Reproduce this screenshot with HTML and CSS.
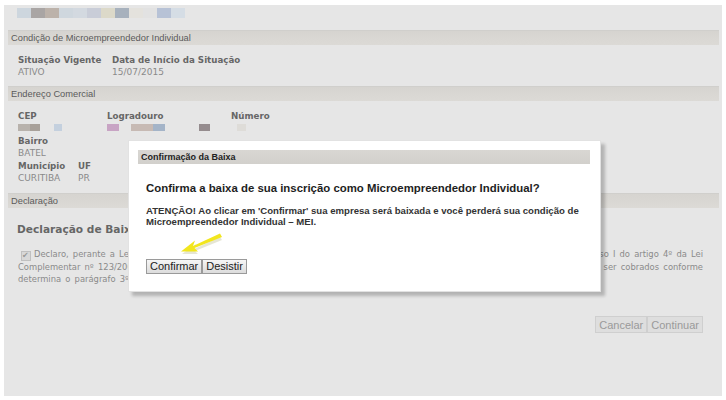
FILE: index.html
```html
<!DOCTYPE html>
<html lang="pt-BR">

<head>
    <meta charset="UTF-8">
    <title>Baixa MEI</title>
    <link rel="stylesheet" href="styles.css">
</head>

<body>
    <div class="page">
        <!-- blurred header strip -->
        <div class="blur-strip">
            <span class="b1"></span><span class="b2"></span><span class="b3"></span><span class="b4"></span>
            <span class="b5"></span><span class="b6"></span><span class="b7"></span><span class="b8"></span>
            <span class="b9"></span><span class="b10"></span><span class="b11"></span><span class="b12"></span>
        </div>

        <div class="sec-head">Condição de Microempreendedor Individual</div>
        <div class="fields first-sec">
            <div class="field w94">
                <div class="lbl">Situação Vigente</div>
                <div class="val">ATIVO</div>
            </div>
            <div class="field">
                <div class="lbl">Data de Início da Situação</div>
                <div class="val">15/07/2015</div>
            </div>
        </div>

        <div class="sec-head">Endereço Comercial</div>
        <div class="fields addr">
            <div class="field w89">
                <div class="lbl">CEP</div>
                <div class="val blur"><span class="c1"></span><span class="c2"></span><span class="c3"></span></div>
            </div>
            <div class="field w124">
                <div class="lbl">Logradouro</div>
                <div class="val blur"><span class="l1"></span><span class="l2"></span><span class="l3"></span><span class="l4"></span></div>
            </div>
            <div class="field">
                <div class="lbl">Número</div>
                <div class="val blur"><span class="n1"></span></div>
            </div>
        </div>
        <div class="fields tight">
            <div class="field">
                <div class="lbl">Bairro</div>
                <div class="val">BATEL</div>
            </div>
        </div>
        <div class="fields tight last-row">
            <div class="field w60">
                <div class="lbl">Município</div>
                <div class="val">CURITIBA</div>
            </div>
            <div class="field">
                <div class="lbl">UF</div>
                <div class="val">PR</div>
            </div>
        </div>

        <div class="sec-head">Declaração</div>
        <h3 class="decl-title">Declaração de Baixa</h3>
        <div class="decl">
            <div class="line">
                <span><span class="chk">&#10004;</span>Declaro, perante a Lei,</span>
                <span>inciso I do artigo 4º da Lei</span>
            </div>
            <div class="line">
                <span>Complementar nº 123/2006</span>
                <span>poderão ser cobrados conforme</span>
            </div>
            <div class="line">
                <span>determina o parágrafo 3º.</span>
            </div>
        </div>

        <div class="actions">
            <button class="btn-faded">Cancelar</button><button class="btn-faded">Continuar</button>
        </div>
    </div>

    <!-- modal -->
    <div class="dialog">
        <div class="dialog-title">Confirmação da Baixa</div>
        <div class="dialog-body">
            <h2>Confirma a baixa de sua inscrição como Microempreendedor Individual?</h2>
            <p>ATENÇÃO! Ao clicar em 'Confirmar' sua empresa será baixada e você perderá sua condição de Microempreendedor Individual – MEI.</p>
            <div class="dialog-btns">
                <button class="btn">Confirmar</button><button class="btn">Desistir</button>
            </div>
        </div>
    </div>

    <svg class="arrow" width="46" height="26" viewBox="0 0 46 26">
        <path d="M40 3 L14 15 L16 10 L2 20 L18 20 L15 17 L42 6 Z" fill="#c8c8a0" opacity="0.45" transform="translate(1,2)" />
        <path d="M41 1.5 L14 14 L16 8.5 L2 19.5 L19 19.5 L15.5 16 L43 5 Z" fill="#f2e61e" />
    </svg>
</body>

</html>
```

FILE: styles.css
```css
body {
    margin: 0;
    background-color: #fff;
    font-family: "DejaVu Sans", Verdana, sans-serif;
}

.page {
    margin: 5px 4px 4px 4px;
    height: 391px;
    background-color: #e6e6e6;
    padding: 3px 3px 0 4px;
    box-sizing: border-box;
    overflow: hidden;
}

.blur-strip {
    display: flex;
    height: 10px;
    margin: 0 0 12px 9px;
}

.blur-strip span {
    width: 14px;
    height: 10px;
}

.b1 { background: #cdd6de; }
.b2 { background: #a9a5a4; }
.b3 { background: #bcb2aa; }
.b4 { background: #cfd7de; }
.b5 { background: #d3d9e0; }
.b6 { background: #c9cdd8; }
.b7 { background: #dcd9c9; }
.b8 { background: #a7b1bd; }
.b9 { background: #e4e2dd; }
.b10 { background: #e2e2e2; }
.b11 { background: #b7c2d6; }
.b12 { background: #d5dde5; }

.sec-head {
    height: 14px;
    line-height: 14px;
    background: linear-gradient(#d6d4d0, #dcdad6);
    border-top: 1px solid #d0cfcc;
    color: #5a5a5a;
    font-family: "Liberation Sans", Arial, sans-serif;
    font-size: 9.3px;
    padding-left: 3px;
}

.fields {
    display: flex;
    padding: 9px 0 0 10px;
}

.fields.first-sec {
    margin-bottom: 8px;
}

.fields.addr {
    padding-top: 9px;
    margin-bottom: 2px;
}

.fields.tight {
    padding-top: 0;
    margin-bottom: 1px;
}

.fields.last-row {
    margin-bottom: 9px;
}

.w94 { width: 94px; }
.w89 { width: 89px; }
.w124 { width: 124px; }
.w60 { width: 60px; }

.lbl {
    font-weight: bold;
    color: #666;
    font-size: 8.7px;
    line-height: 12px;
}

.val {
    color: #8a8a8a;
    font-size: 9px;
    line-height: 12px;
}

.val.blur {
    display: flex;
    align-items: center;
    height: 11px;
}

.val.blur span {
    height: 7px;
}

.c1 { width: 12px; background: #b8b2ac; }
.c2 { width: 10px; background: #a8a099; margin-right: 14px; }
.c3 { width: 8px; background: #c4d0de; }
.l1 { width: 12px; background: #c8a4c4; margin-right: 12px; }
.l2 { width: 22px; background: #c7bab4; }
.l3 { width: 12px; background: #a4b4c8; margin-right: 34px; }
.l4 { width: 11px; background: #958c8e; }
.n1 { width: 9px; background: #dedcd8; margin-left: 6px; }

.decl-title {
    margin: 15px 0 0 9px;
    font-size: 10.6px;
    line-height: 12px;
    color: #666;
    font-weight: bold;
}

.decl {
    margin: 13px 16px 0 10px;
    color: #8a8a8a;
    font-size: 8.4px;
    line-height: 12px;
    word-spacing: 1.5px;
}

.decl .line {
    display: flex;
    justify-content: space-between;
}

.chk {
    display: inline-block;
    width: 8px;
    height: 8px;
    margin: 0 3px 0 3px;
    font-size: 8px;
    line-height: 8px;
    color: #999;
    background: #d8d8d8;
    border: 1px solid #c0c0c0;
    vertical-align: -1px;
    word-spacing: 0;
}

.actions {
    display: flex;
    justify-content: flex-end;
    margin: 31px 16px 0 0;
}

.btn-faded {
    font-family: "Liberation Sans", Arial, sans-serif;
    font-size: 11px;
    color: #9a9a9a;
    background: #dedede;
    border: 1px solid #cfcfcf;
    height: 17px;
    padding: 0 3px;
    margin: 0;
}

.dialog {
    position: absolute;
    left: 128px;
    top: 140px;
    width: 473px;
    height: 152px;
    background-color: #fff;
    box-sizing: border-box;
    padding: 9px 10px 0 9px;
    box-shadow: 4px 4px 3px rgba(0, 0, 0, 0.22);
    border: 1px solid #e2e2e2;
    font-family: "Liberation Sans", Arial, sans-serif;
}

.dialog-title {
    height: 14px;
    line-height: 14px;
    background: linear-gradient(#d9d7d3, #d2d0cc);
    font-size: 9px;
    font-weight: bold;
    color: #222;
    padding-left: 3px;
}

.dialog-body {
    padding: 0 0 0 8px;
}

.dialog-body h2 {
    margin: 17px 0 0 0;
    font-size: 11.4px;
    color: #1e1e1e;
    line-height: 15px;
}

.dialog-body p {
    margin: 9px 0 0 0;
    font-size: 9.6px;
    font-weight: bold;
    color: #333;
    line-height: 11px;
}

.dialog-btns {
    display: flex;
    margin-top: 32px;
}

.btn {
    font-family: "Liberation Sans", Arial, sans-serif;
    font-size: 11px;
    color: #222;
    background: linear-gradient(#f6f6f6, #dcdcdc);
    border: 1px solid #9a9a9a;
    height: 15px;
    padding: 0 3px;
    margin: 0;
    line-height: 13px;
}

.arrow {
    position: absolute;
    left: 179px;
    top: 232px;
}
```
